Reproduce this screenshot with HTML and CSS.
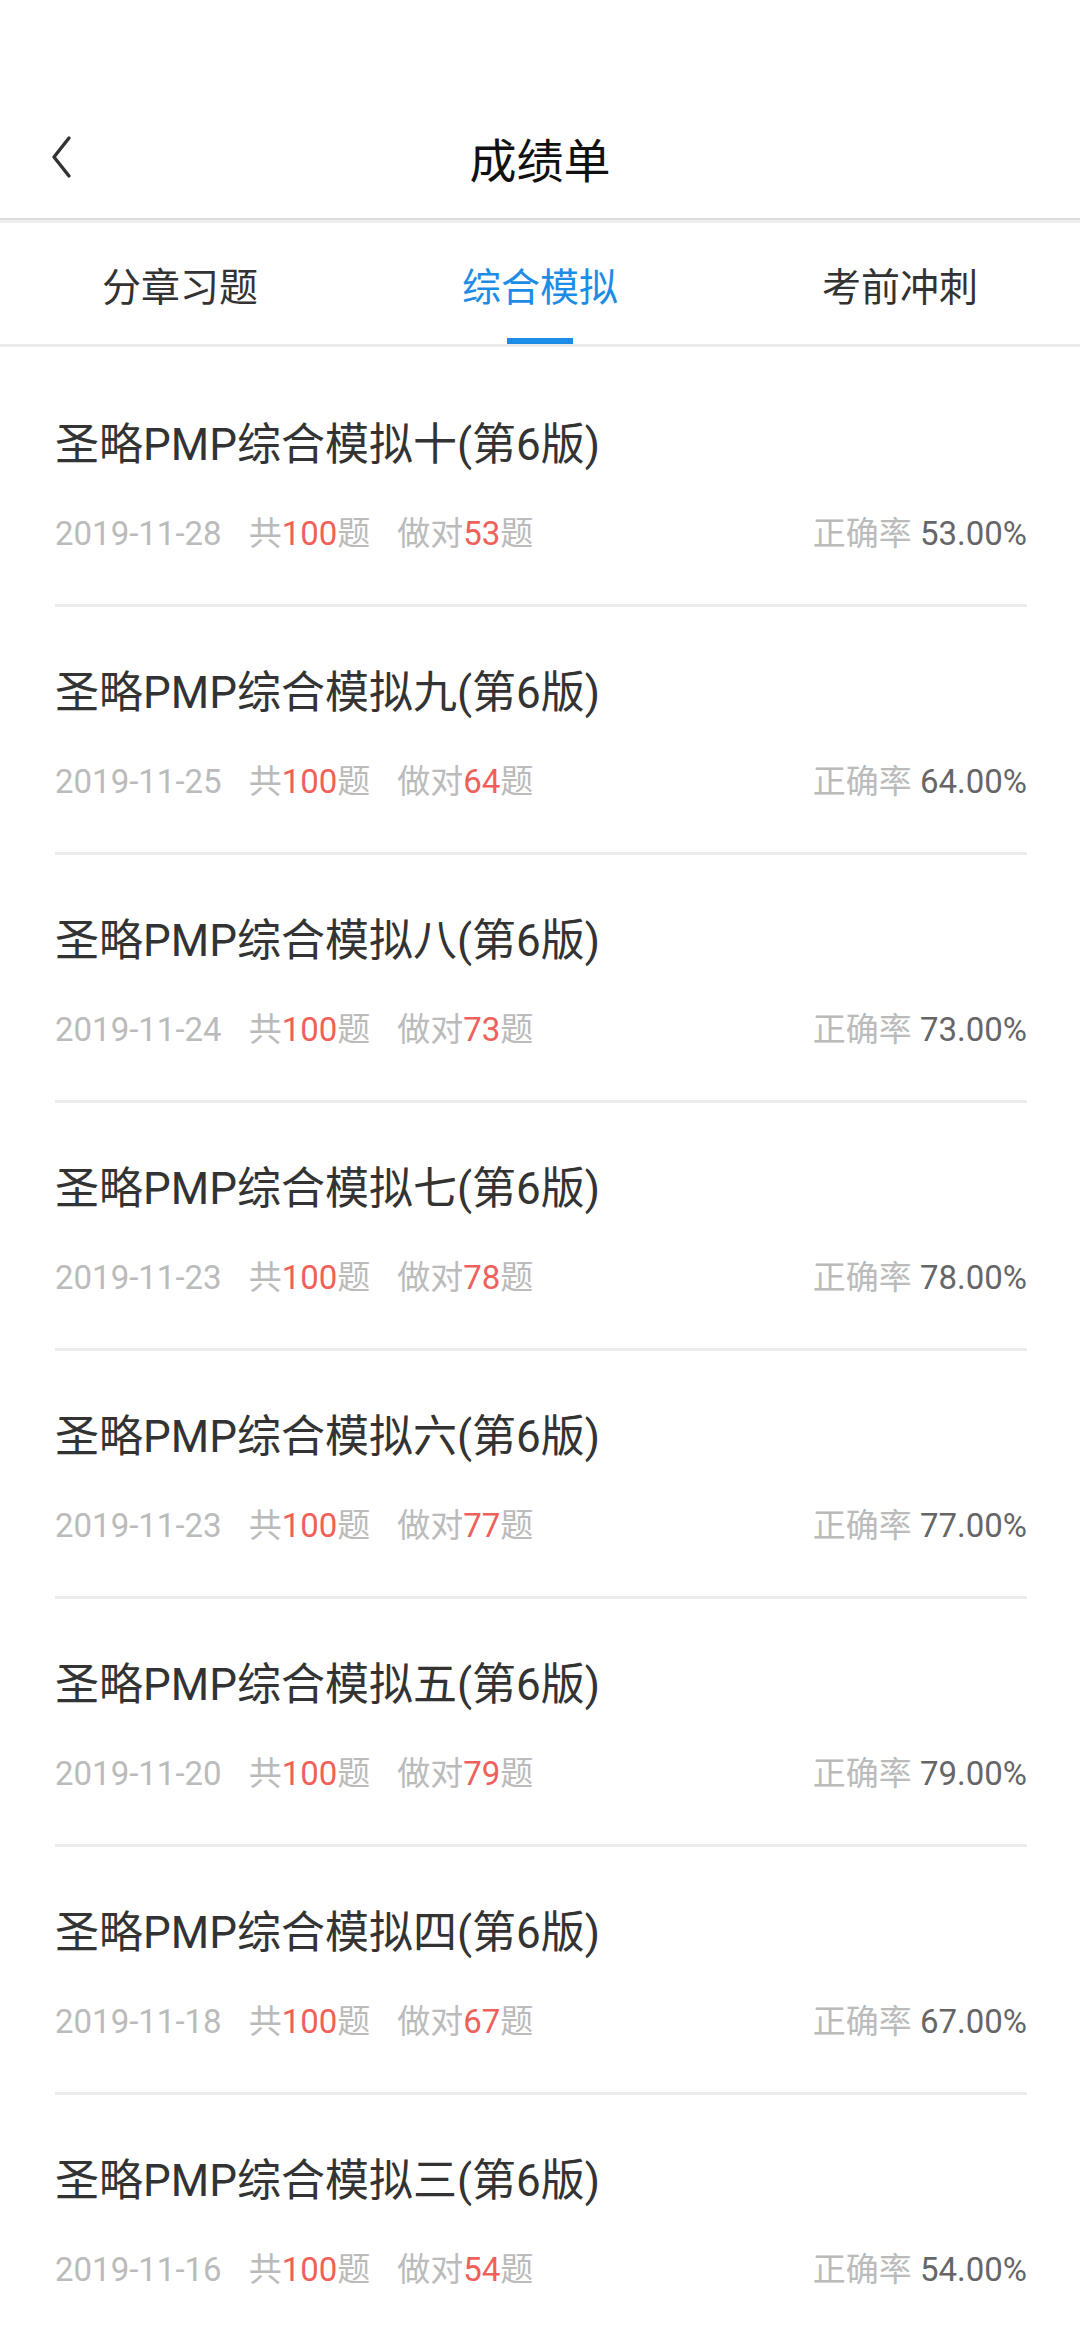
FILE: index.html
```html
<!DOCTYPE html>
<html lang="zh-CN">
<head>
    <meta charset="UTF-8">
    <meta name="viewport" content="width=device-width, initial-scale=1.0">
    <title>成绩单</title>
    <link rel="stylesheet" href="styles.css">
</head>
<body>

<div class="header">
    <div class="back">
        <svg width="24" height="44" viewBox="0 0 24 44"><polyline points="19,3 4,22 19,41" fill="none" stroke="#333" stroke-width="3.4" stroke-linecap="round" stroke-linejoin="round"/></svg>
    </div>
    <div class="title">成绩单</div>
    <div></div>
</div>

<div class="tabs">
    <div class="tab">分章习题</div>
    <div class="tab active">综合模拟</div>
    <div class="tab">考前冲刺</div>
</div>

<div class="list">
    <div class="item">
        <div class="name">圣略PMP综合模拟十(第6版)</div>
        <div class="meta">
            <div><span class="date">2019-11-28</span><span class="count">共<em>100</em>题</span><span class="count">做对<em>53</em>题</span></div>
            <div class="rate">正确率 <b>53.00%</b></div>
        </div>
    </div>
    <div class="item">
        <div class="name">圣略PMP综合模拟九(第6版)</div>
        <div class="meta">
            <div><span class="date">2019-11-25</span><span class="count">共<em>100</em>题</span><span class="count">做对<em>64</em>题</span></div>
            <div class="rate">正确率 <b>64.00%</b></div>
        </div>
    </div>
    <div class="item">
        <div class="name">圣略PMP综合模拟八(第6版)</div>
        <div class="meta">
            <div><span class="date">2019-11-24</span><span class="count">共<em>100</em>题</span><span class="count">做对<em>73</em>题</span></div>
            <div class="rate">正确率 <b>73.00%</b></div>
        </div>
    </div>
    <div class="item">
        <div class="name">圣略PMP综合模拟七(第6版)</div>
        <div class="meta">
            <div><span class="date">2019-11-23</span><span class="count">共<em>100</em>题</span><span class="count">做对<em>78</em>题</span></div>
            <div class="rate">正确率 <b>78.00%</b></div>
        </div>
    </div>
    <div class="item">
        <div class="name">圣略PMP综合模拟六(第6版)</div>
        <div class="meta">
            <div><span class="date">2019-11-23</span><span class="count">共<em>100</em>题</span><span class="count">做对<em>77</em>题</span></div>
            <div class="rate">正确率 <b>77.00%</b></div>
        </div>
    </div>
    <div class="item">
        <div class="name">圣略PMP综合模拟五(第6版)</div>
        <div class="meta">
            <div><span class="date">2019-11-20</span><span class="count">共<em>100</em>题</span><span class="count">做对<em>79</em>题</span></div>
            <div class="rate">正确率 <b>79.00%</b></div>
        </div>
    </div>
    <div class="item">
        <div class="name">圣略PMP综合模拟四(第6版)</div>
        <div class="meta">
            <div><span class="date">2019-11-18</span><span class="count">共<em>100</em>题</span><span class="count">做对<em>67</em>题</span></div>
            <div class="rate">正确率 <b>67.00%</b></div>
        </div>
    </div>
    <div class="item">
        <div class="name">圣略PMP综合模拟三(第6版)</div>
        <div class="meta">
            <div><span class="date">2019-11-16</span><span class="count">共<em>100</em>题</span><span class="count">做对<em>54</em>题</span></div>
            <div class="rate">正确率 <b>54.00%</b></div>
        </div>
    </div>
</div>

</body>
</html>
```

FILE: styles.css
```css
body {
    margin: 0;
    font-family: Roboto, "Noto Sans CJK SC", sans-serif;
    background-color: #fff;
    color: #333;
}
.header {
    height: 122px;
    padding-top: 96px;
    display: grid;
    grid-template-columns: 1fr auto 1fr;
    align-items: center;
    border-bottom: 2px solid #dcdcdc;
}
.back {
    padding-left: 50px;
    display: flex;
    align-items: center;
}
.title {
    font-size: 47px;
    color: #111;
}
.tabs {
    display: grid;
    grid-template-columns: 1fr 1fr 1fr;
    height: 121px;
    border-top: 3px solid #efefef;
    border-bottom: 3px solid #ececec;
}
.tab {
    position: relative;
    display: flex;
    align-items: center;
    justify-content: center;
    font-size: 39px;
    color: #333;
}
.tab.active {
    color: #1d8ce6;
}
.tab.active::after {
    content: "";
    position: absolute;
    bottom: 0;
    left: 147px;
    width: 66px;
    height: 6px;
    background-color: #1d8ce6;
}
.list {
    padding-top: 12px;
}
.item {
    margin: 0 53px 0 55px;
    padding: 56px 0 48px;
    border-bottom: 3px solid #ececec;
}
.name {
    font-size: 44px;
    line-height: 60px;
    color: #333;
    margin-bottom: 37px;
}
.meta {
    display: flex;
    justify-content: space-between;
    font-size: 33px;
    line-height: 44px;
    color: #bbb;
}
.count {
    margin-left: 27px;
}
.count em {
    font-style: normal;
    color: #f0605a;
}
.rate b {
    font-weight: normal;
    color: #666;
}
```
